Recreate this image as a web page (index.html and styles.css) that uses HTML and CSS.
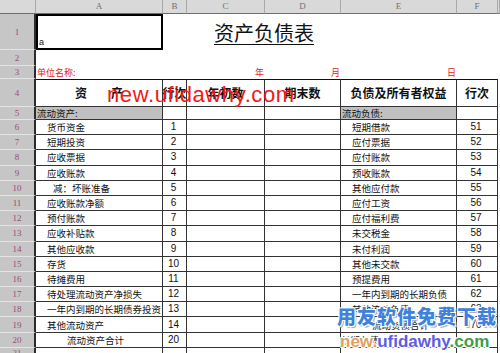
FILE: index.html
```html
<!DOCTYPE html>
<html lang="zh-CN">
<head>
<meta charset="utf-8">
<title>资产负债表</title>
<link rel="stylesheet" href="styles.css">
</head>
<body>
<div class="sheet">
  <div class="ch"></div><div class="ch">A</div><div class="ch">B</div><div class="ch">C</div><div class="ch">D</div><div class="ch">E</div><div class="ch">F</div><div class="ch"></div>

  <div class="rh">1</div>
  <div class="a1"><span>a</span></div>
  <div></div>
  <div class="title"><span>资产负债表</span></div>
  <div></div><div></div><div></div>

  <div class="rh">2</div>
  <div></div><div></div><div></div><div></div><div></div><div></div><div></div>

  <div class="rh">3</div>
  <div class="red">单位名称:</div><div></div><div class="red right">年</div><div class="red right">月</div><div class="red right">日</div><div></div><div></div>

  <div class="rh">4</div>
  <div class="c hd">资　　产</div><div class="c hd">行次</div><div class="c hd">年初数</div><div class="c hd">期末数</div><div class="c hd">负债及所有者权益</div><div class="c hd">行次</div><div></div>

  <div class="rh">5</div>
  <div class="c sect">流动资产:</div><div class="c"></div><div class="c"></div><div class="c"></div><div class="c sect">流动负债:</div><div class="c"></div><div></div>

  <div class="rh">6</div>
  <div class="c t">货币资金</div><div class="c num">1</div><div class="c"></div><div class="c"></div><div class="c t">短期借款</div><div class="c num">51</div><div></div>
  <div class="rh">7</div>
  <div class="c t">短期投资</div><div class="c num">2</div><div class="c"></div><div class="c"></div><div class="c t">应付票据</div><div class="c num">52</div><div></div>
  <div class="rh">8</div>
  <div class="c t">应收票据</div><div class="c num">3</div><div class="c"></div><div class="c"></div><div class="c t">应付账款</div><div class="c num">53</div><div></div>
  <div class="rh">9</div>
  <div class="c t">应收账款</div><div class="c num">4</div><div class="c"></div><div class="c"></div><div class="c t">预收账款</div><div class="c num">54</div><div></div>
  <div class="rh">10</div>
  <div class="c t2">减：坏账准备</div><div class="c num">5</div><div class="c"></div><div class="c"></div><div class="c t">其他应付款</div><div class="c num">55</div><div></div>
  <div class="rh">11</div>
  <div class="c t">应收账款净额</div><div class="c num">6</div><div class="c"></div><div class="c"></div><div class="c t">应付工资</div><div class="c num">56</div><div></div>
  <div class="rh">12</div>
  <div class="c t">预付账款</div><div class="c num">7</div><div class="c"></div><div class="c"></div><div class="c t">应付福利费</div><div class="c num">57</div><div></div>
  <div class="rh">13</div>
  <div class="c t">应收补贴款</div><div class="c num">8</div><div class="c"></div><div class="c"></div><div class="c t">未交税金</div><div class="c num">58</div><div></div>
  <div class="rh">14</div>
  <div class="c t">其他应收款</div><div class="c num">9</div><div class="c"></div><div class="c"></div><div class="c t">未付利润</div><div class="c num">59</div><div></div>
  <div class="rh">15</div>
  <div class="c t">存货</div><div class="c num">10</div><div class="c"></div><div class="c"></div><div class="c t">其他未交款</div><div class="c num">60</div><div></div>
  <div class="rh">16</div>
  <div class="c t">待摊费用</div><div class="c num">11</div><div class="c"></div><div class="c"></div><div class="c t">预提费用</div><div class="c num">61</div><div></div>
  <div class="rh">17</div>
  <div class="c t">待处理流动资产净损失</div><div class="c num">12</div><div class="c"></div><div class="c"></div><div class="c t">一年内到期的长期负债</div><div class="c num">62</div><div></div>
  <div class="rh">18</div>
  <div class="c t">一年内到期的长期债券投资</div><div class="c num">13</div><div class="c"></div><div class="c"></div><div class="c t">其他流动负债</div><div class="c num">63</div><div></div>
  <div class="rh">19</div>
  <div class="c t">其他流动资产</div><div class="c num">14</div><div class="c"></div><div class="c"></div><div class="c tot">流动负债合计</div><div class="c num">70</div><div></div>
  <div class="rh">20</div>
  <div class="c tot">流动资产合计</div><div class="c num">20</div><div class="c"></div><div class="c"></div><div class="c plain">长期负债:</div><div class="c num"></div><div></div>
  <div class="rh">21</div>
  <div class="c"></div><div class="c"></div><div class="c"></div><div class="c"></div><div class="c"></div><div class="c"></div><div></div>

  <div class="wm-red">new.ufidawhy.com</div>
  <div class="wm-blue">用友软件免费下载</div>
  <div class="wm-url"><span class="n">new.</span><span class="u">ufidawhy</span><span class="m">.com</span></div>
</div>
</body>
</html>
```

FILE: styles.css
```css
* { box-sizing: border-box; margin: 0; padding: 0; }
html, body { width: 500px; height: 353px; overflow: hidden; background: #fff; }
body { font-family: "Noto Sans CJK SC", "Noto Sans", sans-serif; color: #111; }

.sheet {
  position: relative;
  display: grid;
  grid-template-columns: 36px 127px 24px 78px 76px 116px 41px 2px;
  grid-template-rows: 14px 36px 16px 13px 28px 13px repeat(15, 15.2px) 12px;
}

.ch {
  background: #d9d9d9;
  border-right: 1px solid #a9a9a9;
  border-bottom: 1px solid #6e6e6e;
  color: #707070;
  font: 9px/13px "Liberation Serif", serif;
  text-align: center;
}

.rh {
  background: #c6c6c6;
  border-bottom: 1px solid #e4e4e4;
  border-right: 2px solid #2c2c2c;
  color: #9c4c70;
  font: 9px "Liberation Serif", serif;
  display: flex;
  align-items: center;
  justify-content: center;
}

.a1 {
  border: 2px solid #000;
  display: flex;
  align-items: flex-end;
  padding: 0 0 1px 1px;
  font: 9px/10px "Liberation Sans", sans-serif;
}

.title {
  grid-column: span 2;
  display: flex;
  align-items: center;
  justify-content: center;
  font-size: 20px;
  line-height: 24px;
  padding-top: 1px;
  white-space: nowrap;
}
.title span {
  text-decoration: underline;
  text-decoration-thickness: 1px;
  text-underline-offset: 3px;
}

.red {
  color: #e21a1a;
  font-size: 9px;
  line-height: 13px;
  white-space: nowrap;
  padding-left: 1px;
}
.right { text-align: right; padding-right: 1px; }

.c {
  border-right: 1px solid #333;
  border-bottom: 1px solid #333;
  display: flex;
  align-items: center;
  white-space: nowrap;
  font-size: 9.5px;
  line-height: 12px;
}
.hd {
  border-top: 1px solid #111;
  justify-content: center;
  font-size: 12px;
  font-weight: 700;
  line-height: 14px;
}
.sect { background: #c0c0c0; padding-left: 1px; }
.t { padding-left: 11px; }
.t2 { padding-left: 17px; }
.tot { padding-left: 31px; }
.plain { padding-left: 0; }
.num {
  justify-content: center;
  font-family: "Liberation Sans", sans-serif;
  font-size: 10px;
  padding-right: 2px;
}

.wm-red {
  position: absolute;
  left: 107px;
  top: 84px;
  font: 22px/22px "Liberation Sans", sans-serif;
  letter-spacing: 0.6px;
  color: #f01818;
  white-space: nowrap;
}

.wm-blue {
  position: absolute;
  left: 337px;
  top: 304px;
  font-family: "Noto Sans CJK SC", sans-serif;
  font-size: 19px;
  line-height: 24px;
  font-weight: 900;
  letter-spacing: 1px;
  color: #3f82dc;
  white-space: nowrap;
  text-shadow: 1px 1px 0 #fff, -1px -1px 0 #fff, 1px -1px 0 #fff, -1px 1px 0 #fff, 2px 2px 1px #9ab;
}

.wm-url {
  position: absolute;
  left: 340px;
  top: 333px;
  font: 700 17px/17px "Liberation Sans", sans-serif;
  white-space: nowrap;
  text-shadow: 1px 1px 0 #fff, -1px -1px 0 #fff, 1px -1px 0 #fff, -1px 1px 0 #fff;
}
.wm-url .n { color: #e0a060; }
.wm-url .u { color: #5e5ee0; }
.wm-url .m { color: #3aa04a; }
```
